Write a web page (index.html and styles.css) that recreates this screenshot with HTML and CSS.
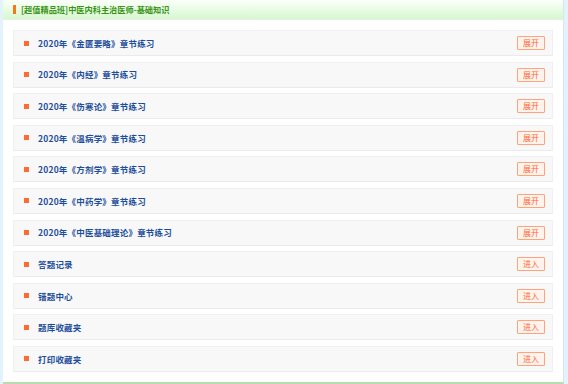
FILE: index.html
```html
<!DOCTYPE html>
<html lang="zh">
<head>
<meta charset="utf-8">
<title>中医内科主治医师-基础知识</title>
<link rel="stylesheet" href="styles.css">
</head>
<body>
<div class="panel">
  <div class="head">
    <span class="head-mark"></span>
    <span class="head-title">[超值精品班]中医内科主治医师-基础知识</span>
  </div>
  <ul class="list">
    <li class="row"><span class="dot"></span><span class="label">2020年《金匮要略》章节练习</span><span class="btn">展开</span></li>
    <li class="row"><span class="dot"></span><span class="label">2020年《内经》章节练习</span><span class="btn">展开</span></li>
    <li class="row"><span class="dot"></span><span class="label">2020年《伤寒论》章节练习</span><span class="btn">展开</span></li>
    <li class="row"><span class="dot"></span><span class="label">2020年《温病学》章节练习</span><span class="btn">展开</span></li>
    <li class="row"><span class="dot"></span><span class="label">2020年《方剂学》章节练习</span><span class="btn">展开</span></li>
    <li class="row"><span class="dot"></span><span class="label">2020年《中药学》章节练习</span><span class="btn">展开</span></li>
    <li class="row"><span class="dot"></span><span class="label">2020年《中医基础理论》章节练习</span><span class="btn">展开</span></li>
    <li class="row"><span class="dot"></span><span class="label">答题记录</span><span class="btn">进入</span></li>
    <li class="row"><span class="dot"></span><span class="label">错题中心</span><span class="btn">进入</span></li>
    <li class="row"><span class="dot"></span><span class="label">题库收藏夹</span><span class="btn">进入</span></li>
    <li class="row"><span class="dot"></span><span class="label">打印收藏夹</span><span class="btn">进入</span></li>
  </ul>
</div>
</body>
</html>
```
FILE: styles.css
```css
html, body {
  margin: 0;
  padding: 0;
}
body {
  background: #e2f3fb;
  font-family: "Noto Sans CJK SC", "Liberation Sans", sans-serif;
  width: 568px;
  height: 384px;
  overflow: hidden;
}
.panel {
  box-sizing: border-box;
  margin: 0 4px 0 3px;
  height: 384px;
  background: #fff;
  border-right: 1px solid #d8e6ee;
  border-bottom: 2px solid #b7dcae;
}
.head {
  box-sizing: border-box;
  height: 20px;
  display: flex;
  align-items: center;
  padding-left: 10px;
  background: linear-gradient(#fbfffa, #d6f8ce);
  border-bottom: 1px solid #e6f0e6;
}
.head-mark {
  width: 3px;
  height: 9px;
  background: #f07a1a;
  margin-right: 5px;
}
.head-title {
  font-size: 8.2px;
  font-weight: bold;
  color: #3a9418;
  line-height: 1;
}
.list {
  list-style: none;
  margin: 0;
  padding: 10px 10px 0 10px;
  display: flex;
  flex-direction: column;
  gap: 5.6px;
}
.row {
  box-sizing: border-box;
  height: 26px;
  display: flex;
  align-items: center;
  padding: 0 7px 0 10px;
  background: #f8f8f8;
  border: 1px solid #f0f0f0;
  border-bottom-color: #ebebeb;
}
.dot {
  width: 5px;
  height: 5px;
  background: #ff6a33;
  margin-right: 9px;
  flex: none;
}
.label {
  flex: 1;
  font-size: 8.5px;
  font-weight: bold;
  color: #1e4f9c;
  line-height: 1;
  letter-spacing: 0.2px;
}
.btn {
  box-sizing: border-box;
  height: 14px;
  padding: 0 5px;
  border: 1px solid #ffa27e;
  background: #fff3ec;
  color: #ff6633;
  font-size: 8px;
  line-height: 12px;
  border-radius: 1px;
}
```
